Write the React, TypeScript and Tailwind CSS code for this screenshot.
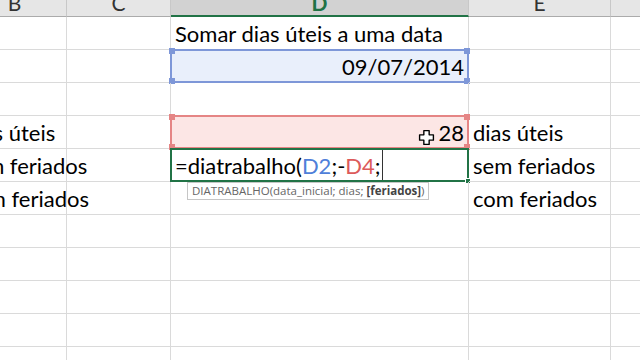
import React from 'react'

const font = { fontFamily: 'Lato, "Open Sans", sans-serif' }

function Handles({ color }: { color: string }) {
  return (
    <>
      <span className={`absolute -left-[3px] -top-[3px] h-[6px] w-[6px] ${color}`} />
      <span className={`absolute -right-[3px] -top-[3px] h-[6px] w-[6px] ${color}`} />
      <span className={`absolute -left-[3px] -bottom-[3px] h-[6px] w-[6px] ${color}`} />
      <span className={`absolute -right-[3px] -bottom-[3px] h-[6px] w-[6px] ${color}`} />
    </>
  )
}

function Cell({ w, children, className = '' }: { w: string; children?: React.ReactNode; className?: string }) {
  return (
    <div className={`${w} relative flex h-full shrink-0 items-end whitespace-nowrap border-b border-r border-[#dadada] pb-[1px] pl-[4px] leading-[28px] ${className}`}>
      {children}
    </div>
  )
}

function Row({ children }: { children: React.ReactNode }) {
  return <div className="flex h-[33px]">{children}</div>
}

function FatCross() {
  return (
    <svg width="17" height="17" viewBox="0 0 16 16" className="absolute left-[247px] top-[13px]">
      <path
        d="M5.5 1.5h5v4h4v5h-4v4h-5v-4h-4v-5h4z"
        fill="#fff"
        stroke="#000"
        strokeWidth="1.3"
        strokeLinejoin="round"
      />
    </svg>
  )
}

export default function App() {
  return (
    <div className="h-[360px] w-[640px] overflow-hidden bg-white text-[22px] text-black" style={font}>
      <div className="ml-[-37px]">
        {/* column headers */}
        <div className="flex h-[17px] overflow-hidden text-[21px]">
          <div className="flex w-[104px] shrink-0 items-end justify-center border-b border-r border-b-[#ababab] border-r-[#c8c8c8] bg-[#e6e6e6] leading-none text-[#333]">
            <span className="mb-[3px]">B</span>
          </div>
          <div className="flex w-[104px] shrink-0 items-end justify-center border-b border-r border-b-[#ababab] border-r-[#c8c8c8] bg-[#e6e6e6] leading-none text-[#333]">
            <span className="mb-[3px]">C</span>
          </div>
          <div className="flex w-[298px] shrink-0 items-end justify-center border-b-2 border-r border-b-[#217346] border-r-[#c8c8c8] bg-[#d2d2d2] leading-none font-bold text-[#217346]">
            <span className="mb-[2px]">D</span>
          </div>
          <div className="flex w-[142px] shrink-0 items-end justify-center border-b border-r border-b-[#ababab] border-r-[#c8c8c8] bg-[#e6e6e6] leading-none text-[#333]">
            <span className="mb-[3px]">E</span>
          </div>
          <div className="w-[100px] shrink-0 border-b border-b-[#ababab] bg-[#e6e6e6]" />
        </div>

        <Row>
          <Cell w="w-[104px]" />
          <Cell w="w-[104px]" />
          <Cell w="w-[298px]">Somar dias úteis a uma data</Cell>
          <Cell w="w-[142px]" />
          <Cell w="w-[100px]" />
        </Row>

        <Row>
          <Cell w="w-[104px]" />
          <Cell w="w-[104px]" />
          <Cell w="w-[298px]" className="justify-end bg-[#e9effb] pr-[4px]">
            09/07/2014
            <div className="absolute -left-px -top-px bottom-[-1px] right-[-1px] border-2 border-[#7e97d8]">
              <Handles color="bg-[#7e97d8]" />
            </div>
          </Cell>
          <Cell w="w-[142px]" />
          <Cell w="w-[100px]" />
        </Row>

        <Row>
          <Cell w="w-[104px]" />
          <Cell w="w-[104px]" />
          <Cell w="w-[298px]" />
          <Cell w="w-[142px]" />
          <Cell w="w-[100px]" />
        </Row>

        <Row>
          <Cell w="w-[104px]">
            <span className="-ml-[2px]">dias úteis</span>
          </Cell>
          <Cell w="w-[104px]" />
          <Cell w="w-[298px]" className="justify-end bg-[#fce6e5] pr-[4px]">
            28
            <div className="absolute -left-px -top-px bottom-[-1px] right-[-1px] border-2 border-[#e58585]">
              <Handles color="bg-[#e58585]" />
            </div>
            <FatCross />
          </Cell>
          <Cell w="w-[142px]">dias úteis</Cell>
          <Cell w="w-[100px]" />
        </Row>

        <Row>
          <Cell w="w-[104px]">
            <span className="-ml-[2px]">sem feriados</span>
          </Cell>
          <Cell w="w-[104px]" />
          <Cell w="w-[298px]">
            <span>
              =diatrabalho(<span className="text-[#4f7fd9]">D2</span>;-<span className="text-[#dc5a5a]">D4</span>;
            </span>
            <span className="mb-[-1px] ml-[1px] h-[32px] w-[1px] self-end bg-[#333]" />
            <div className="absolute -left-px -top-px bottom-[-1px] right-[-1px] border-2 border-[#217346]">
              <span className="absolute -bottom-[4px] -right-[4px] h-[6px] w-[6px] border border-white bg-[#217346]" />
            </div>
          </Cell>
          <Cell w="w-[142px]">sem feriados</Cell>
          <Cell w="w-[100px]" />
        </Row>

        <Row>
          <Cell w="w-[104px]">
            <span className="-ml-[2px]">com feriados</span>
          </Cell>
          <Cell w="w-[104px]" />
          <Cell w="w-[298px]">
            <div
              className="absolute left-[16px] top-[0px] flex h-[18px] items-center border border-[#c6c6c6] bg-white px-[4px] text-[11.5px] leading-none text-[#666]"
              style={{ fontFamily: '"Open Sans", "Noto Sans", sans-serif' }}
            >
              DIATRABALHO(data_inicial; dias; <b className="ml-[3px] font-bold text-[#444]">[feriados]</b>)
            </div>
          </Cell>
          <Cell w="w-[142px]">com feriados</Cell>
          <Cell w="w-[100px]" />
        </Row>

        {[0, 1, 2, 3, 4].map((i) => (
          <Row key={i}>
            <Cell w="w-[104px]" />
            <Cell w="w-[104px]" />
            <Cell w="w-[298px]" />
            <Cell w="w-[142px]" />
            <Cell w="w-[100px]" />
          </Row>
        ))}
      </div>
    </div>
  )
}
